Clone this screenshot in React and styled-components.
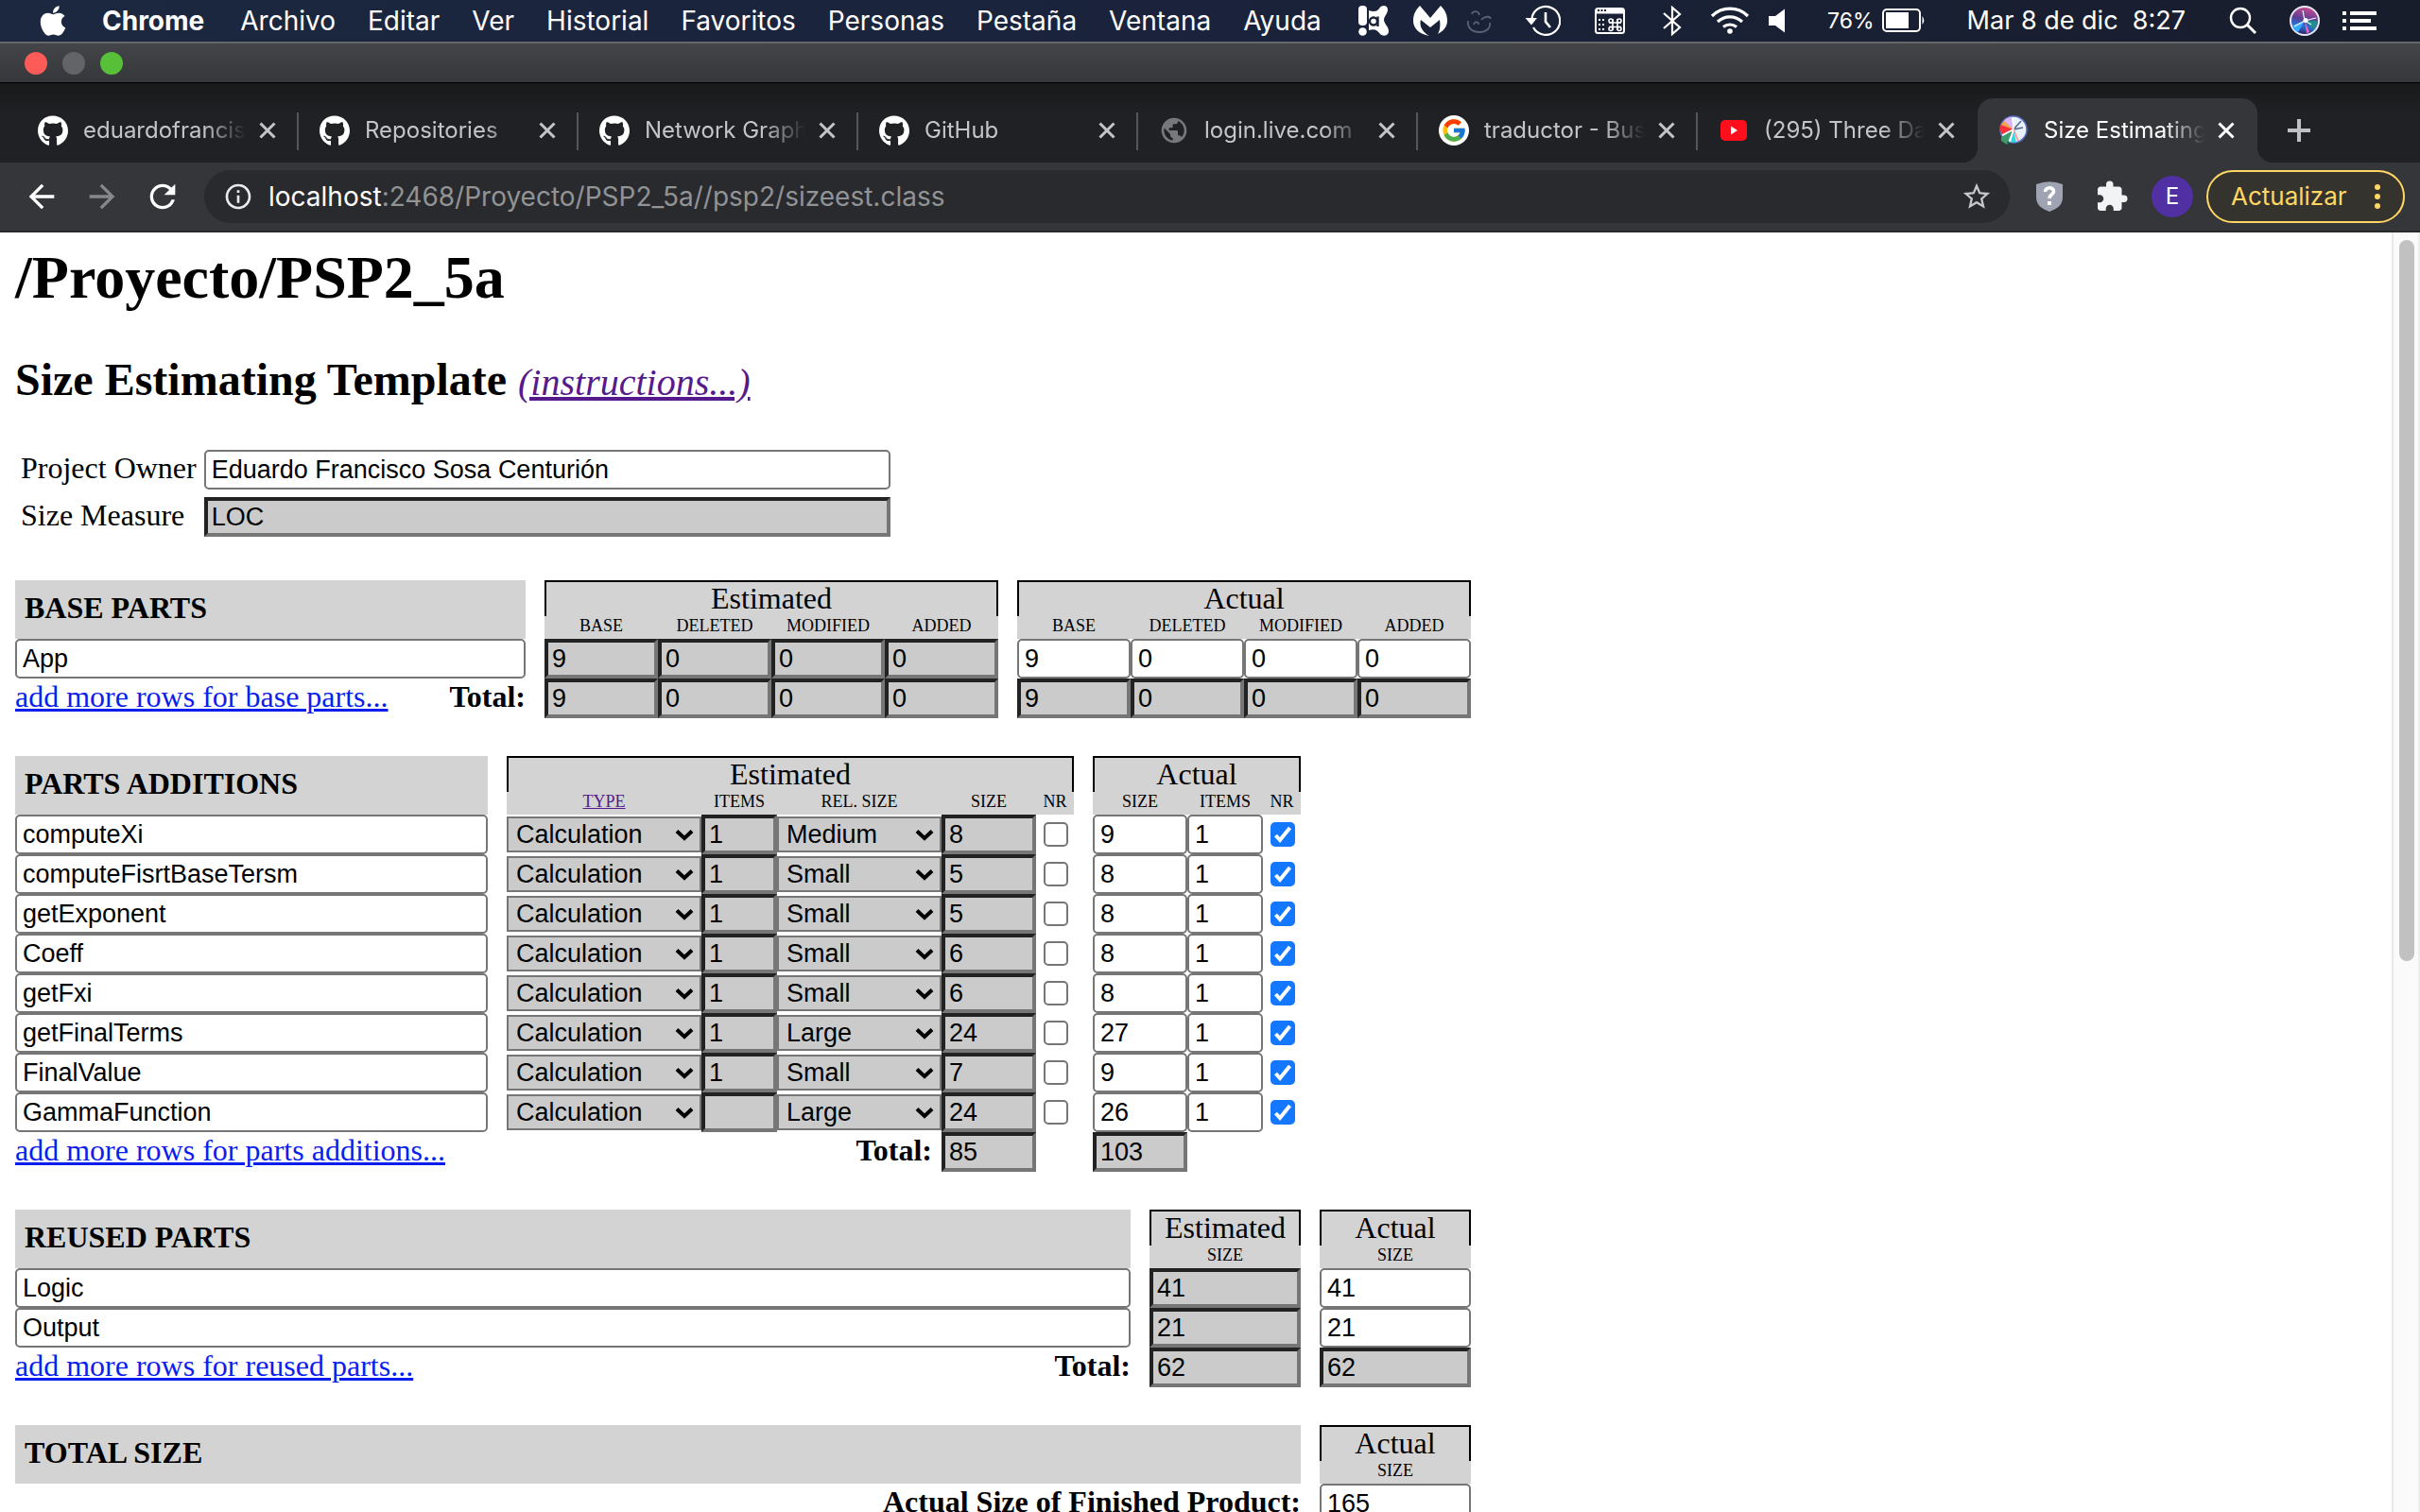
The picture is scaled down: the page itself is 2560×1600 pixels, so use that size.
import React from "react";
import styled, { createGlobalStyle, css } from "styled-components";
import { FaApple, FaGithub } from "react-icons/fa";
import { FcGoogle } from "react-icons/fc";
import {
  MdArrowBack,
  MdArrowForward,
  MdExtension,
  MdInfoOutline,
  MdPublic,
  MdRefresh,
  MdStarBorder,
} from "react-icons/md";

const ui = `Inter, "Noto Sans", sans-serif`;
const serif = `"Liberation Serif", "Times New Roman", serif`;
const sans = `"Liberation Sans", Arial, sans-serif`;

const svgUrl = (markup) => `url("data:image/svg+xml,${encodeURIComponent(markup)}")`;
const chevron = svgUrl(
  `<svg xmlns="http://www.w3.org/2000/svg" viewBox="0 0 20 13"><path d="M2 2.5 L10 10 L18 2.5" fill="none" stroke="#000" stroke-width="4"/></svg>`
);
const tick = svgUrl(
  `<svg xmlns="http://www.w3.org/2000/svg" viewBox="0 0 26 26"><path d="M5.5 14 L10 19 L20.500 6" fill="none" stroke="#fff" stroke-width="4"/></svg>`
);

const GlobalStyle = createGlobalStyle`
  *, *::before, *::after { box-sizing: border-box; }
  body { margin: 0; background: #fff; }
  button { margin: 0; padding: 0; border: 0; background: none; color: inherit; font: inherit; }
`;

/* ---------- frame ---------- */

const Desktop = styled.div`
  display: flex;
  flex-direction: column;
  height: 100vh;
  overflow: hidden;
`;

/* ---------- menu bar ---------- */

const MenuBar = styled.header`
  display: flex;
  flex: none;
  align-items: center;
  justify-content: space-between;
  height: 44px;
  padding: 0 46px 0 38px;
  background: linear-gradient(90deg, #1b2840, #1a233b 50%, #181d2c);
  color: #fff;
  font: 400 28px/44px ${ui};
  white-space: nowrap;
`;

const Menus = styled.nav`
  display: flex;
  align-items: center;
  gap: 34px;
`;

const MenuItem = styled.button`
  margin-right: ${(p) => (p.$app ? 4 : 0)}px;
  font-weight: ${(p) => (p.$app ? 700 : 400)};
`;

const Status = styled.div`
  display: flex;
  align-items: center;
`;

const StatusItem = styled.span`
  display: flex;
  align-items: center;
  margin-left: ${(p) => p.$gap}px;
  font-size: ${(p) => (p.$small ? 23 : 27)}px;
  white-space: pre;
`;

/* ---------- window ---------- */

const TitleBar = styled.div`
  display: flex;
  flex: none;
  align-items: center;
  gap: 16px;
  height: 44px;
  padding-left: 26px;
  border-top: 2px solid #66676a;
  border-bottom: 1px solid #000;
  background: linear-gradient(#434548, #36373a);
`;

const Light = styled.button`
  width: 24px;
  height: 24px;
  border-radius: 50%;
  background: ${(p) => p.$color};
`;

const TabStrip = styled.div`
  display: flex;
  flex: none;
  align-items: flex-end;
  height: 84px;
  padding-left: 16px;
  background: linear-gradient(#191a1b, #202124 40%);
  font: 400 24px/32px ${ui};
`;

const flare = css`
  content: "";
  position: absolute;
  bottom: 0;
  width: 16px;
  height: 16px;
`;

const Tab = styled.div`
  position: relative;
  display: flex;
  align-items: center;
  gap: 14px;
  width: ${(p) => (p.$first ? 300 : 296)}px;
  height: 68px;
  padding: 0 24px 0 ${(p) => (p.$first ? 24 : 22)}px;
  color: #c2c5c9;

  ${(p) =>
    p.$divider &&
    css`
      &::after {
        content: "";
        position: absolute;
        right: 0;
        top: 15px;
        width: 2px;
        height: 40px;
        background: #53565b;
      }
    `}

  ${(p) =>
    p.$active &&
    css`
      border-radius: 16px 16px 0 0;
      background: #35363a;
      color: #fff;
      &::before {
        ${flare}
        left: -16px;
        background: radial-gradient(circle at 0 0, transparent 16px, #35363a 16px);
      }
      &::after {
        ${flare}
        right: -16px;
        background: radial-gradient(circle at 100% 0, transparent 16px, #35363a 16px);
      }
    `}
`;

const Favicon = styled.span`
  display: flex;
  flex: none;
  align-items: center;
  justify-content: center;
  width: 32px;
  height: 32px;
`;

const GoogleDisc = styled(Favicon)`
  border-radius: 50%;
  background: #fff;
`;

const TabTitle = styled.span`
  flex: 1;
  overflow: hidden;
  padding-left: 2px;
  white-space: nowrap;
  mask-image: linear-gradient(90deg, #000 calc(100% - 44px), transparent);
`;

const IconButton = styled.button`
  display: flex;
  flex: none;
  align-items: center;
  justify-content: center;
  color: ${(p) => p.$color || "inherit"};
`;

const NewTab = styled(IconButton)`
  width: 88px;
  height: 68px;
`;

const Toolbar = styled.div`
  display: flex;
  flex: none;
  align-items: center;
  height: 74px;
  padding: 0 16px 0 24px;
  border-bottom: 2px solid #28292b;
  background: #35363a;
`;

const NavButtons = styled.div`
  display: flex;
  gap: 24px;
  margin-right: 24px;
`;

const Omnibox = styled.div`
  display: flex;
  flex: 1;
  align-items: center;
  gap: 16px;
  height: 56px;
  padding: 0 18px 0 20px;
  border-radius: 28px;
  background: #292a2d;
`;

const Url = styled.span`
  flex: 1;
  color: #919395;
  font: 400 28px/40px ${ui};
`;

const Host = styled.span`
  color: #fff;
`;

const Extensions = styled.div`
  display: flex;
  align-items: center;
  gap: 34px;
  margin: 0 24px 0 28px;
`;

const Avatar = styled.button`
  width: 44px;
  height: 44px;
  margin-right: 14px;
  border-radius: 50%;
  background: #5130a3;
  color: #fff;
  font: 400 24px/44px ${ui};
`;

const UpdateButton = styled.button`
  display: flex;
  align-items: center;
  justify-content: space-between;
  width: 210px;
  height: 56px;
  padding: 0 24px;
  border: 2px solid #fdd663;
  border-radius: 28px;
  background: #35332d;
  color: #fdd663;
  font: 400 26px/40px ${ui};
`;

/* ---------- document ---------- */

const Viewport = styled.div`
  display: flex;
  flex: 1;
  min-height: 0;
`;

const Page = styled.main`
  flex: 1;
  overflow: hidden;
  padding: 12px 16px;
  background: #fff;
  color: #000;
  font: 400 32px/38px ${serif};
`;

const ScrollTrack = styled.div`
  flex: none;
  width: 30px;
  padding: 8px 4px 8px 6px;
  border-left: 2px solid #e8e8e8;
  border-right: 2px solid #ededed;
  background: #fafafa;
`;

const ScrollThumb = styled.div`
  height: 57%;
  border-radius: 8px;
  background: #c1c1c1;
`;

const Title = styled.h1`
  margin: 0 0 44px;
  font: 700 64px/72px ${serif};
`;

const Subtitle = styled.h2`
  margin: 0 0 46px;
  font: 700 48px/56px ${serif};
`;

const Link = styled.a`
  color: ${(p) => (p.$visited ? "#551a8b" : "#0a1eee")};
`;

const Instructions = styled(Link)`
  font: italic 400 40px/40px ${serif};
`;

const Details = styled.div`
  display: grid;
  grid-template-columns: max-content 726px;
  gap: 8px;
  margin: 0 0 46px 6px;
`;

const Field = styled.input`
  display: block;
  width: 100%;
  height: 42px;
  margin: 0;
  padding: 0 6px;
  border: 2px solid #767676;
  border-radius: 5px;
  background: #fff;
  color: #000;
  font: 400 27px/34px ${sans};
  outline: none;

  &:read-only {
    padding: 0 4px;
    border-width: 4px;
    border-color: #222 #767676 #767676 #222;
    border-radius: 0;
    background: #cbcbcb;
  }
`;

const Choice = styled.select`
  display: block;
  width: 100%;
  height: 38px;
  margin: 2px 0;
  padding: 0 8px;
  appearance: none;
  border: 2px solid #767676;
  border-radius: 0;
  background: #cbcbcb ${chevron} right 6px center / 20px 13px no-repeat;
  color: #000;
  font: 400 27px/34px ${sans};
`;

const Tick = styled.input`
  display: block;
  width: 26px;
  height: 26px;
  margin: 8px;
  appearance: none;
  border: 2px solid #767676;
  border-radius: 5px;
  background: #fff;

  &:checked {
    border: 0;
    background: #1477ff ${tick} center / 26px 26px no-repeat;
  }
`;

const Parts = styled.table`
  table-layout: fixed;
  width: ${(p) => p.$width}px;
  margin-bottom: 40px;
  border-spacing: 0;

  th,
  td {
    padding: 0;
    text-align: left;
    vertical-align: top;
  }
`;

const SectionHead = styled.th`
  && {
    padding: 0 10px 4px;
    vertical-align: middle;
    background: #d3d3d3;
    font-weight: 700;
  }
`;

const GroupHead = styled.th`
  && {
    height: 38px;
    padding-bottom: 2px;
    border: 2px solid #000;
    border-bottom: 0;
    background: #d3d3d3;
    font-weight: 400;
    line-height: 34px;
    text-align: center;
  }
`;

const ColumnHead = styled.th`
  && {
    height: 24px;
    background: #d3d3d3;
    font-size: 18px;
    font-weight: 400;
    line-height: 20px;
    text-align: center;
    white-space: nowrap;
  }
`;

const Footer = styled.div`
  display: flex;
  justify-content: space-between;
  white-space: nowrap;
`;

const TotalLabel = styled.strong`
  display: block;
  margin-left: auto;
  padding-right: ${(p) => p.$inset || 0}px;
  text-align: right;
`;

/* ---------- drawings ---------- */

const Close = () => (
  <svg width="18" height="18" viewBox="0 0 18 18" stroke="currentColor" strokeWidth="3">
    <path d="M1.500 1.500 L16.500 16.500 M16.500 1.500 L1.500 16.500" />
  </svg>
);

const YouTube = () => (
  <svg width="28" height="22" viewBox="0 0 28 22">
    <rect width="28" height="22" rx="5" fill="#ff0f1c" />
    <path d="M11 6.500 L18 11 L11 15.500 Z" fill="#fff" />
  </svg>
);

const PieClock = () => (
  <svg width="32" height="32" viewBox="0 0 32 32">
    <circle cx="16" cy="15" r="14" fill="#e6f1fc" stroke="#5a6fc0" strokeWidth="1.500" />
    <path d="M16 15 L5 7 A14 14 0 0 1 14 1.500 Z" fill="#d7b4f3" />
    <path d="M16 15 L2.500 11 A14 14 0 0 1 6 6 Z" fill="#f6a04d" />
    <path d="M16 15 L4 21 A14 14 0 0 1 2.500 10 Z" fill="#f8323c" />
    <path d="M15 16 L3 23 L3 27 L9 31 Z" fill="#3d9a6a" />
    <path d="M9 31 L12 29.500 L10 27 Z" fill="#17693f" />
    <path d="M16 16 L13 28.500 A14 14 0 0 0 19 28.500 Z" fill="#2fd6dc" />
    <path d="M16 15 L21 27" stroke="#ff8a8a" strokeWidth="1.500" />
    <path d="M16 15 L24 6 M16 15 L26 13" stroke="#54648f" strokeWidth="1.500" />
    <path d="M16 15 L15 3 M16 15 L4 21 M16 15 L12 28" stroke="#fff" strokeWidth="1.500" />
  </svg>
);

const Avast = () => (
  <svg width="34" height="34" viewBox="0 0 34 34">
    <rect x="0" y="1" width="9" height="21" rx="4" fill="#fff" />
    <circle cx="4.500" cy="28.500" r="4.300" fill="#fff" />
    <path
      d="M11 6 C17 8 20 7 22 4 C24 0 31 0 31 5 C31 10 27 12 27 16 C27 20 32 23 32 28 C32 33 26 34 23 31 C20 27 17 25 11 27 Z"
      fill="#fff"
    />
    <circle cx="16" cy="17.500" r="4" fill="none" stroke="#1a2236" strokeWidth="2.400" />
    <path d="M20.500 12.500 V23" stroke="#1a2236" strokeWidth="2.400" />
  </svg>
);

const Malware = () => (
  <svg width="36" height="34" viewBox="0 0 36 34">
    <path
      d="M7 1 C2 6 0 11 0 17 C0 25 6 31 17 33 C10 29 6 23 8 16 L18 24 L28 16 C29 22 28 28 26 31 C32 28 36 23 36 17 C36 11 34 6 29 1 L18 14 Z"
      fill="#fff"
    />
  </svg>
);

const Ghost = () => (
  <svg width="28" height="28" viewBox="0 0 28 28" fill="none" stroke="#5a6174" strokeWidth="1.800">
    <path d="M2 14 C1 22 7 26 14 26 C21 26 26 22 25 16" />
    <path d="M6 7 C7 3 13 3 14 8 M16 13 C18 10 25 8 26 12 M8 18 C9 14 13 15 13 18" />
  </svg>
);

const TimeMachine = () => (
  <svg width="38" height="34" viewBox="0 0 38 34" fill="none" stroke="#fff" strokeWidth="2.200">
    <path d="M7.500 14 A15 15 0 1 1 9 24" />
    <path d="M22 8 V18 L27 24" strokeWidth="2.600" />
    <path d="M0.500 14 H13 L7 21.500 Z" fill="#fff" stroke="none" />
  </svg>
);

const KeyboardViewer = () => (
  <svg width="32" height="30" viewBox="0 0 32 30" fill="none" stroke="#fff">
    <rect x="1" y="2" width="30" height="26" rx="2.500" strokeWidth="2" />
    <path d="M1 5 H31" strokeWidth="5" />
    <path d="M3 4 H12" stroke="#1a2236" strokeWidth="2" strokeDasharray="2 1.500" />
    <path d="M4 14 H11 M4 19 H11 M4 24 H11" strokeWidth="2" strokeDasharray="2 2" />
    <path d="M19 13 V25 M24 13 V25 M15 17 H28 M15 21.500 H28" strokeWidth="1.600" />
    <g strokeWidth="1.600">
      <circle cx="17" cy="15" r="2" />
      <circle cx="26" cy="15" r="2" />
      <circle cx="17" cy="23.500" r="2" />
      <circle cx="26" cy="23.500" r="2" />
    </g>
  </svg>
);

const Bluetooth = () => (
  <svg width="20" height="32" viewBox="0 0 20 32" fill="none" stroke="#fff" strokeWidth="2.200">
    <path d="M1 8 L18 23 L10 30 V2 L18 9 L1 24" />
  </svg>
);

const Wifi = () => (
  <svg width="42" height="30" viewBox="0 0 42 30" fill="none" stroke="#fff" strokeWidth="3.200">
    <path d="M2 10 A27 27 0 0 1 40 10" />
    <path d="M8 16 A19 19 0 0 1 34 16" />
    <path d="M14 21.500 A11 11 0 0 1 28 21.500" />
    <circle cx="21" cy="26" r="2.800" fill="#fff" stroke="none" />
  </svg>
);

const Volume = () => (
  <svg width="18" height="26" viewBox="0 0 18 26">
    <path d="M0 8 H7 L17 0.500 V25.500 L7 18 H0 Z" fill="#fff" />
  </svg>
);

const Battery = () => (
  <svg width="46" height="26" viewBox="0 0 46 26">
    <rect x="1" y="1" width="39" height="23" rx="4" fill="none" stroke="#fff" strokeWidth="2" />
    <rect x="4" y="4" width="24" height="17" fill="#fff" />
    <path d="M42.500 8 Q46 12.500 42.500 17 Z" fill="#fff" />
  </svg>
);

const Search = () => (
  <svg width="30" height="30" viewBox="0 0 30 30" fill="none" stroke="#fff" strokeWidth="2.400">
    <circle cx="12" cy="12" r="10" />
    <path d="M19 19 L28 28" strokeWidth="3" />
  </svg>
);

const Siri = () => (
  <svg width="32" height="32" viewBox="0 0 32 32">
    <defs>
      <linearGradient id="orb" x1="0.600" y1="0" x2="0.400" y2="1">
        <stop offset="0" stopColor="#d0488f" />
        <stop offset="0.450" stopColor="#5a3f96" />
        <stop offset="0.700" stopColor="#2b6fd6" />
        <stop offset="1" stopColor="#2a1f5c" />
      </linearGradient>
    </defs>
    <circle cx="16" cy="16" r="15" fill="url(#orb)" stroke="#e9e8f5" strokeWidth="2" />
    <path d="M16 16 L3 21 Q4 26 9 28 Z" fill="#35a9ff" />
    <path d="M16 16 L29 16 Q29 22 25 25 Z" fill="#1e8f8a" />
    <path d="M16 16 L18 29 L21 28 Z" fill="#f264b4" />
    <path d="M16 16 L5 22 M16 16 L28 13 M16 16 L23 20 M16 16 L14 5" stroke="#e6fbff" strokeWidth="1.200" />
    <circle cx="17" cy="15.500" r="2.500" fill="#fff" />
  </svg>
);

const ListIcon = () => (
  <svg width="36" height="20" viewBox="0 0 36 20" fill="#fff">
    <path d="M0 0 H4 V4 H0 Z M8 0 H36 V4 H8 Z M0 8 H4 V12 H0 Z M8 8 H30 V12 H8 Z M0 16 H4 V20 H0 Z M8 16 H36 V20 H8 Z" />
  </svg>
);

const Shield = () => (
  <svg width="28" height="32" viewBox="0 0 28 32">
    <path d="M0 3 Q14 -2.500 28 3 V17 C28 25 22 29 14 32 C6 29 0 25 0 17 Z" fill="#9fa4b3" />
    <path
      d="M9.500 11 C9.500 5.500 18.500 5.500 18.500 10.500 C18.500 14 14 13.500 14 18"
      fill="none"
      stroke="#fff"
      strokeWidth="3.600"
    />
    <rect x="12" y="21" width="4" height="4" fill="#fff" />
  </svg>
);

const Dots = () => (
  <svg width="6" height="28" viewBox="0 0 6 28" fill="currentColor">
    <circle cx="3" cy="4" r="3" />
    <circle cx="3" cy="14" r="3" />
    <circle cx="3" cy="24" r="3" />
  </svg>
);

/* ---------- data ---------- */

const menus = ["Archivo", "Editar", "Ver", "Historial", "Favoritos", "Personas", "Pestaña", "Ventana", "Ayuda"];

const github = (
  <Favicon>
    <FaGithub size={33} color="#fff" />
  </Favicon>
);

const tabs = [
  { title: "eduardofrancisco", icon: github },
  { title: "Repositories", icon: github },
  { title: "Network Graph", icon: github },
  { title: "GitHub", icon: github },
  { title: "login.live.com", icon: <Favicon><MdPublic size={34} color="#77787b" /></Favicon> },
  { title: "traductor - Buscar", icon: <GoogleDisc><FcGoogle size={28} /></GoogleDisc> },
  { title: "(295) Three Days", icon: <Favicon><YouTube /></Favicon> },
  { title: "Size Estimating", icon: <Favicon><PieClock /></Favicon>, active: true },
];

const baseColumns = ["BASE", "DELETED", "MODIFIED", "ADDED"];
const baseValues = ["9", "0", "0", "0"];

const additions = [
  ["computeXi", "1", "Medium", "8", "9", "1"],
  ["computeFisrtBaseTersm", "1", "Small", "5", "8", "1"],
  ["getExponent", "1", "Small", "5", "8", "1"],
  ["Coeff", "1", "Small", "6", "8", "1"],
  ["getFxi", "1", "Small", "6", "8", "1"],
  ["getFinalTerms", "1", "Large", "24", "27", "1"],
  ["FinalValue", "1", "Small", "7", "9", "1"],
  ["GammaFunction", "", "Large", "24", "26", "1"],
];

const reused = [
  ["Logic", "41", "41"],
  ["Output", "21", "21"],
];

const Columns = ({ widths }) => (
  <colgroup>
    {widths.map((width, i) => (
      <col key={i} width={width} />
    ))}
  </colgroup>
);

const Box = ({ label, value, locked }) => (
  <td>
    <Field aria-label={label} defaultValue={value} readOnly={locked} />
  </td>
);

/* ---------- sections ---------- */

const BaseParts = () => (
  <Parts $width={1540}>
    <Columns widths={[540, 20, 120, 120, 120, 120, 20, 120, 120, 120, 120]} />
    <thead>
      <tr>
        <SectionHead rowSpan={2}>BASE PARTS</SectionHead>
        <td rowSpan={2} />
        <GroupHead colSpan={4}>Estimated</GroupHead>
        <td rowSpan={2} />
        <GroupHead colSpan={4}>Actual</GroupHead>
      </tr>
      <tr>
        {[...baseColumns, ...baseColumns].map((name, i) => (
          <ColumnHead key={i}>{name}</ColumnHead>
        ))}
      </tr>
    </thead>
    <tbody>
      <tr>
        <Box label="Base part" value="App" />
        <td />
        {baseValues.map((v, i) => (
          <Box key={i} label={`Estimated ${baseColumns[i]}`} value={v} locked />
        ))}
        <td />
        {baseValues.map((v, i) => (
          <Box key={i} label={`Actual ${baseColumns[i]}`} value={v} />
        ))}
      </tr>
      <tr>
        <td>
          <Footer>
            <Link href="#base">add more rows for base parts...</Link>
            <TotalLabel>Total:</TotalLabel>
          </Footer>
        </td>
        <td />
        {baseValues.map((v, i) => (
          <Box key={i} label={`Total estimated ${baseColumns[i]}`} value={v} locked />
        ))}
        <td />
        {baseValues.map((v, i) => (
          <Box key={i} label={`Total actual ${baseColumns[i]}`} value={v} locked />
        ))}
      </tr>
    </tbody>
  </Parts>
);

const Additions = () => (
  <Parts $width={1360}>
    <Columns widths={[500, 20, 206, 80, 174, 100, 40, 20, 100, 80, 40]} />
    <thead>
      <tr>
        <SectionHead rowSpan={2}>PARTS ADDITIONS</SectionHead>
        <td rowSpan={2} />
        <GroupHead colSpan={5}>Estimated</GroupHead>
        <td rowSpan={2} />
        <GroupHead colSpan={3}>Actual</GroupHead>
      </tr>
      <tr>
        <ColumnHead>
          <Link $visited href="#type">TYPE</Link>
        </ColumnHead>
        {["ITEMS", "REL. SIZE", "SIZE", "NR", "SIZE", "ITEMS", "NR"].map((name, i) => (
          <ColumnHead key={i}>{name}</ColumnHead>
        ))}
      </tr>
    </thead>
    <tbody>
      {additions.map(([name, items, rel, size, actualSize, actualItems]) => (
        <tr key={name}>
          <Box label="Part addition" value={name} />
          <td />
          <td>
            <Choice aria-label={`${name} type`} defaultValue="Calculation">
              <option>Calculation</option>
            </Choice>
          </td>
          <Box label={`${name} estimated items`} value={items} locked />
          <td>
            <Choice aria-label={`${name} relative size`} defaultValue={rel}>
              <option>Small</option>
              <option>Medium</option>
              <option>Large</option>
            </Choice>
          </td>
          <Box label={`${name} estimated size`} value={size} locked />
          <td>
            <Tick type="checkbox" aria-label={`${name} estimated NR`} />
          </td>
          <td />
          <Box label={`${name} actual size`} value={actualSize} />
          <Box label={`${name} actual items`} value={actualItems} />
          <td>
            <Tick type="checkbox" aria-label={`${name} actual NR`} defaultChecked />
          </td>
        </tr>
      ))}
      <tr>
        <td>
          <Link href="#additions">add more rows for parts additions...</Link>
        </td>
        <td />
        <td colSpan={3}>
          <TotalLabel $inset={10}>Total:</TotalLabel>
        </td>
        <Box label="Total estimated size" value="85" locked />
        <td />
        <td />
        <Box label="Total actual size" value="103" locked />
        <td />
        <td />
      </tr>
    </tbody>
  </Parts>
);

const Reused = () => (
  <Parts $width={1540}>
    <Columns widths={[1180, 20, 160, 20, 160]} />
    <thead>
      <tr>
        <SectionHead rowSpan={2}>REUSED PARTS</SectionHead>
        <td rowSpan={2} />
        <GroupHead>Estimated</GroupHead>
        <td rowSpan={2} />
        <GroupHead>Actual</GroupHead>
      </tr>
      <tr>
        <ColumnHead>SIZE</ColumnHead>
        <ColumnHead>SIZE</ColumnHead>
      </tr>
    </thead>
    <tbody>
      {reused.map(([name, estimated, actual]) => (
        <tr key={name}>
          <Box label="Reused part" value={name} />
          <td />
          <Box label={`${name} estimated size`} value={estimated} locked />
          <td />
          <Box label={`${name} actual size`} value={actual} />
        </tr>
      ))}
      <tr>
        <td>
          <Footer>
            <Link href="#reused">add more rows for reused parts...</Link>
            <TotalLabel>Total:</TotalLabel>
          </Footer>
        </td>
        <td />
        <Box label="Total estimated reused size" value="62" locked />
        <td />
        <Box label="Total actual reused size" value="62" locked />
      </tr>
    </tbody>
  </Parts>
);

const TotalSize = () => (
  <Parts $width={1540}>
    <Columns widths={[1360, 20, 160]} />
    <thead>
      <tr>
        <SectionHead rowSpan={2}>TOTAL SIZE</SectionHead>
        <td rowSpan={2} />
        <GroupHead>Actual</GroupHead>
      </tr>
      <tr>
        <ColumnHead>SIZE</ColumnHead>
      </tr>
    </thead>
    <tbody>
      <tr>
        <td>
          <TotalLabel>Actual Size of Finished Product:</TotalLabel>
        </td>
        <td />
        <Box label="Actual size of finished product" value="165" />
      </tr>
    </tbody>
  </Parts>
);

export default function App() {
  return (
    <Desktop>
      <GlobalStyle />
      <MenuBar>
        <Menus>
          <IconButton aria-label="Apple">
            <FaApple size={36} />
          </IconButton>
          <MenuItem $app>Chrome</MenuItem>
          {menus.map((name) => (
            <MenuItem key={name}>{name}</MenuItem>
          ))}
        </Menus>
        <Status>
          <StatusItem $gap={0}><Avast /></StatusItem>
          <StatusItem $gap={24}><Malware /></StatusItem>
          <StatusItem $gap={20}><Ghost /></StatusItem>
          <StatusItem $gap={34}><TimeMachine /></StatusItem>
          <StatusItem $gap={36}><KeyboardViewer /></StatusItem>
          <StatusItem $gap={40}><Bluetooth /></StatusItem>
          <StatusItem $gap={30}><Wifi /></StatusItem>
          <StatusItem $gap={20}><Volume /></StatusItem>
          <StatusItem $gap={44} $small>76%</StatusItem>
          <StatusItem $gap={8}><Battery /></StatusItem>
          <StatusItem $gap={44}>{"Mar 8 de dic  8:27"}</StatusItem>
          <StatusItem $gap={46}><Search /></StatusItem>
          <StatusItem $gap={34}><Siri /></StatusItem>
          <StatusItem $gap={24}><ListIcon /></StatusItem>
        </Status>
      </MenuBar>

      <TitleBar>
        <Light $color="#fc5b57" aria-label="Close window" />
        <Light $color="#636467" aria-label="Minimise window" />
        <Light $color="#57c038" aria-label="Zoom window" />
      </TitleBar>

      <TabStrip>
        {tabs.map((tab, i) => (
          <Tab key={tab.title} $first={i === 0} $active={tab.active} $divider={i < 6}>
            {tab.icon}
            <TabTitle>{tab.title}</TabTitle>
            <IconButton aria-label={`Close ${tab.title}`}>
              <Close />
            </IconButton>
          </Tab>
        ))}
        <NewTab aria-label="New tab" $color="#bdc1c6">
          <svg width="24" height="24" viewBox="0 0 24 24" stroke="currentColor" strokeWidth="4">
            <path d="M12 0 V24 M0 12 H24" />
          </svg>
        </NewTab>
      </TabStrip>

      <Toolbar>
        <NavButtons>
          <IconButton aria-label="Back" $color="#fff"><MdArrowBack size={40} /></IconButton>
          <IconButton aria-label="Forward" $color="#87888b"><MdArrowForward size={40} /></IconButton>
          <IconButton aria-label="Reload" $color="#fff"><MdRefresh size={40} /></IconButton>
        </NavButtons>
        <Omnibox>
          <MdInfoOutline size={32} color="#e8eaed" />
          <Url>
            <Host>localhost</Host>:2468/Proyecto/PSP2_5a//psp2/sizeest.class
          </Url>
          <IconButton aria-label="Bookmark" $color="#c6c8cb"><MdStarBorder size={34} /></IconButton>
        </Omnibox>
        <Extensions>
          <IconButton aria-label="Shield"><Shield /></IconButton>
          <IconButton aria-label="Extensions" $color="#f1f3f4"><MdExtension size={36} /></IconButton>
        </Extensions>
        <Avatar>E</Avatar>
        <UpdateButton>
          Actualizar
          <Dots />
        </UpdateButton>
      </Toolbar>

      <Viewport>
        <Page>
          <Title>/Proyecto/PSP2_5a</Title>
          <Subtitle>
            Size Estimating Template{" "}
            <Instructions $visited href="#instructions">(instructions...)</Instructions>
          </Subtitle>
          <Details>
            <label htmlFor="owner">Project Owner</label>
            <Field id="owner" defaultValue="Eduardo Francisco Sosa Centurión" />
            <label htmlFor="measure">Size Measure</label>
            <Field id="measure" defaultValue="LOC" readOnly />
          </Details>
          <BaseParts />
          <Additions />
          <Reused />
          <TotalSize />
        </Page>
        <ScrollTrack>
          <ScrollThumb />
        </ScrollTrack>
      </Viewport>
    </Desktop>
  );
}
